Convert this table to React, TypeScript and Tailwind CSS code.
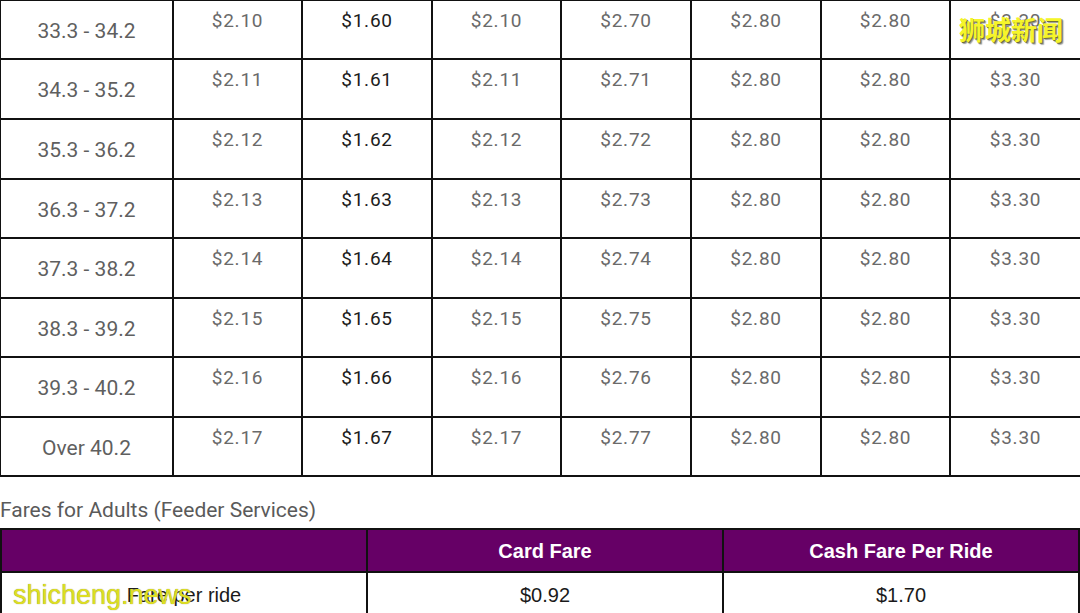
const bands = [
  { range: "33.3 - 34.2", fares: ["$2.10", "$1.60", "$2.10", "$2.70", "$2.80", "$2.80", "$3.30"], h: "h-[59px]" },
  { range: "34.3 - 35.2", fares: ["$2.11", "$1.61", "$2.11", "$2.71", "$2.80", "$2.80", "$3.30"], h: "h-[60px]" },
  { range: "35.3 - 36.2", fares: ["$2.12", "$1.62", "$2.12", "$2.72", "$2.80", "$2.80", "$3.30"], h: "h-[60px]" },
  { range: "36.3 - 37.2", fares: ["$2.13", "$1.63", "$2.13", "$2.73", "$2.80", "$2.80", "$3.30"], h: "h-[59px]" },
  { range: "37.3 - 38.2", fares: ["$2.14", "$1.64", "$2.14", "$2.74", "$2.80", "$2.80", "$3.30"], h: "h-[60px]" },
  { range: "38.3 - 39.2", fares: ["$2.15", "$1.65", "$2.15", "$2.75", "$2.80", "$2.80", "$3.30"], h: "h-[59px]" },
  { range: "39.3 - 40.2", fares: ["$2.16", "$1.66", "$2.16", "$2.76", "$2.80", "$2.80", "$3.30"], h: "h-[60px]" },
  { range: "Over 40.2", fares: ["$2.17", "$1.67", "$2.17", "$2.77", "$2.80", "$2.80", "$3.30"], h: "h-[59px]" },
];

export default function App() {
  return (
    <div className="relative w-[1080px] h-[613px] overflow-hidden bg-white font-['Roboto',sans-serif]">
      {/* Distance fare table */}
      <div className="border-t border-l border-[#111]">
        {bands.map((band) => (
          <div
            key={band.range}
            className="grid grid-cols-[173px_129px_130px_129px_130px_130px_129px_1fr]"
          >
            <div
              className={`${band.h} flex items-center justify-center pt-[4px] border-r-2 border-b-2 border-[#111] text-[21px] text-[#5f5f5f]`}
            >
              {band.range}
            </div>
            {band.fares.map((fare, i) => (
              <div
                key={i}
                className={`${band.h} pt-[6px] text-center border-b-2 border-[#111] text-[19px] leading-[27px] tracking-[0.04em] ${
                  i < 6 ? "border-r-2" : ""
                } ${i === 1 ? "text-[#1c1c1c]" : "text-[#6a6a6a]"}`}
              >
                {fare}
              </div>
            ))}
          </div>
        ))}
      </div>

      <p className="pt-[19px] pb-[4px] text-[21px] leading-[28px] text-[#5a5a5a]">
        Fares for Adults (Feeder Services)
      </p>

      {/* Feeder services table */}
      <div className="border-l-2 border-t-2 border-[#111] font-['Liberation_Sans',sans-serif] text-[20px]">
        <div className="grid grid-cols-[366px_356px_1fr] bg-[#660066] font-bold text-white">
          <div className="h-[43px] border-r-2 border-b-2 border-[#111]" />
          <div className="h-[43px] flex items-center justify-center border-r-2 border-b-2 border-[#111]">
            Card Fare
          </div>
          <div className="h-[43px] flex items-center justify-center border-r-2 border-b-2 border-[#111]">
            Cash Fare Per Ride
          </div>
        </div>
        <div className="grid grid-cols-[366px_356px_1fr] text-[#1a1a1a]">
          <div className="h-[44px] flex items-center justify-center border-r-2 border-[#111]">
            Fare per ride
          </div>
          <div className="h-[44px] flex items-center justify-center border-r-2 border-[#111]">
            $0.92
          </div>
          <div className="h-[44px] flex items-center justify-center border-r-2 border-[#111]">
            $1.70
          </div>
        </div>
      </div>

      {/* Watermarks */}
      <div className="absolute left-[959px] top-[16px] text-[26px] leading-none font-semibold text-[#f5f52a] font-['Noto_Sans_CJK_SC',sans-serif] [text-shadow:1px_1px_0_#6e6e3a,2px_2px_1px_#999]">
        狮城新闻
      </div>
      <div className="absolute left-[13px] top-[581px] text-[27px] leading-[28px] text-[#dede22] font-['Liberation_Sans',sans-serif] [text-shadow:0_0_1px_#8a8a30]">
        shicheng.news
      </div>
    </div>
  );
}
